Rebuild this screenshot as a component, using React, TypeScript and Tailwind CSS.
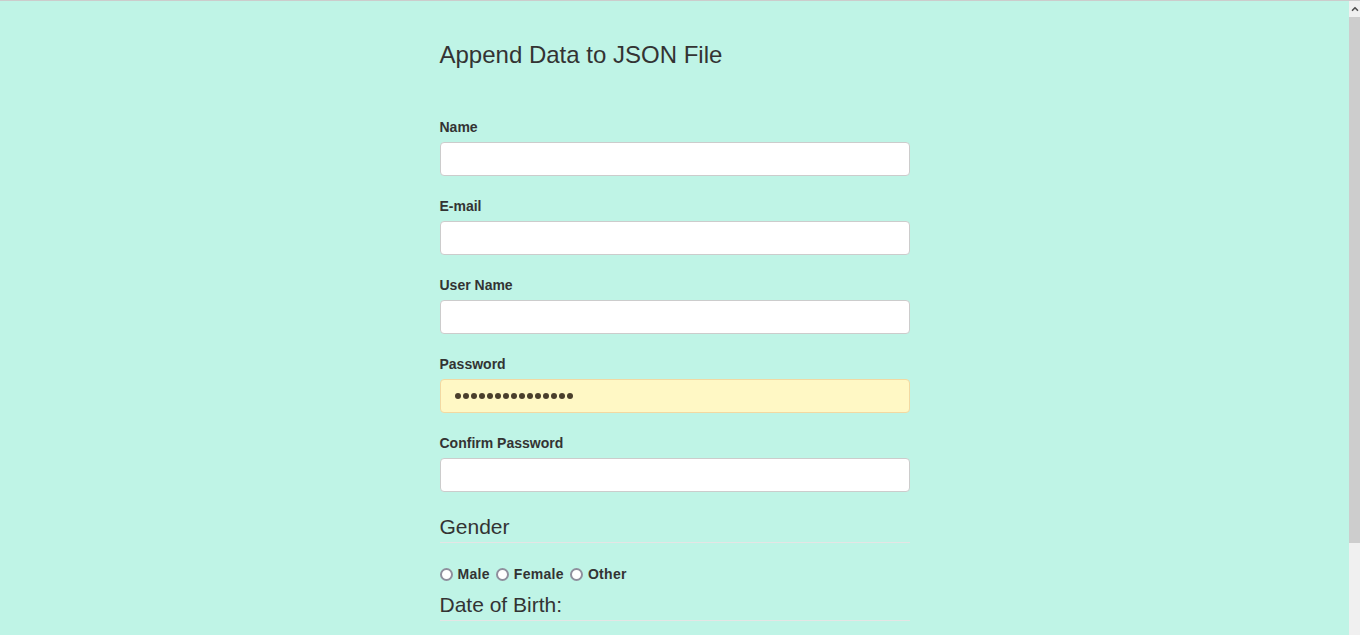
import { FC } from 'react';
import { ChevronUp } from 'lucide-react';

const fields = [
  { label: 'Name', type: 'text' },
  { label: 'E-mail', type: 'email' },
  { label: 'User Name', type: 'text' },
  { label: 'Password', type: 'password', filled: true },
  { label: 'Confirm Password', type: 'password' },
];

const Field: FC<{ label: string; type: string; filled?: boolean }> = ({ label, type, filled }) => (
  <div className="mb-5">
    <label className="block text-sm font-bold leading-5 mb-[5px]">{label}</label>
    {filled ? (
      // autofilled password: masked dots drawn as circles
      <div className="flex items-center gap-[2px] w-full h-[34px] pl-[14px] rounded border border-[#f2d9a2] bg-[#fff8c5]">
        {Array.from({ length: 15 }).map((_, i) => (
          <span key={i} className="w-[6px] h-[6px] rounded-full bg-[#4a3f2c]" />
        ))}
      </div>
    ) : (
      <input
        type={type}
        className="block w-full h-[34px] px-3 rounded border border-[#cccccc] bg-white text-sm outline-none"
      />
    )}
  </div>
);

const Radio: FC<{ label: string }> = ({ label }) => (
  <label className="flex items-center mr-[6px]">
    <input
      type="radio"
      name="gender"
      className="appearance-none m-0 w-[13px] h-[13px] rounded-full border-2 border-[#8f8f9d] bg-white"
    />
    <span className="ml-[5px] tracking-[0.3px]">{label}</span>
  </label>
);

const App: FC = () => {
  return (
    <div
      className="flex h-[635px] overflow-hidden border-t border-[#cccccc] text-[#333333]"
      style={{ fontFamily: '"Liberation Sans", Arial, sans-serif' }}
    >
      <main className="flex-1 bg-[#bff4e6]">
        <div className="mx-auto w-[470px]">
          <h3 className="text-2xl leading-[26px] pt-[41px] mb-[49px]">Append Data to JSON File</h3>

          <form>
            {fields.map((f) => (
              <Field key={f.label} {...f} />
            ))}

            <div className="text-[21px] leading-[30px] border-b border-[#e5e5e5]">Gender</div>
            <div className="flex items-center mt-[21px] text-sm font-bold leading-5">
              <Radio label="Male" />
              <Radio label="Female" />
              <Radio label="Other" />
            </div>

            <div className="mt-[6px] text-[21px] leading-[30px] border-b border-[#e5e5e5]">Date of Birth:</div>
            <div className="flex gap-2 mt-5">
              <select className="h-[34px] px-2 rounded border border-[#cccccc] bg-white text-sm">
                <option>Day</option>
              </select>
              <select className="h-[34px] px-2 rounded border border-[#cccccc] bg-white text-sm">
                <option>Month</option>
              </select>
              <select className="h-[34px] px-2 rounded border border-[#cccccc] bg-white text-sm">
                <option>Year</option>
              </select>
            </div>
          </form>
        </div>
      </main>

      {/* scrollbar */}
      <div className="w-[11px] flex flex-col bg-[#f0f0f0]">
        <div className="h-[16px] flex items-center justify-center">
          <ChevronUp className="w-[10px] h-[10px] text-[#505050]" strokeWidth={4} />
        </div>
        <div className="h-[526px] bg-[#cdcdcd]" />
      </div>
    </div>
  );
};

export default App;
